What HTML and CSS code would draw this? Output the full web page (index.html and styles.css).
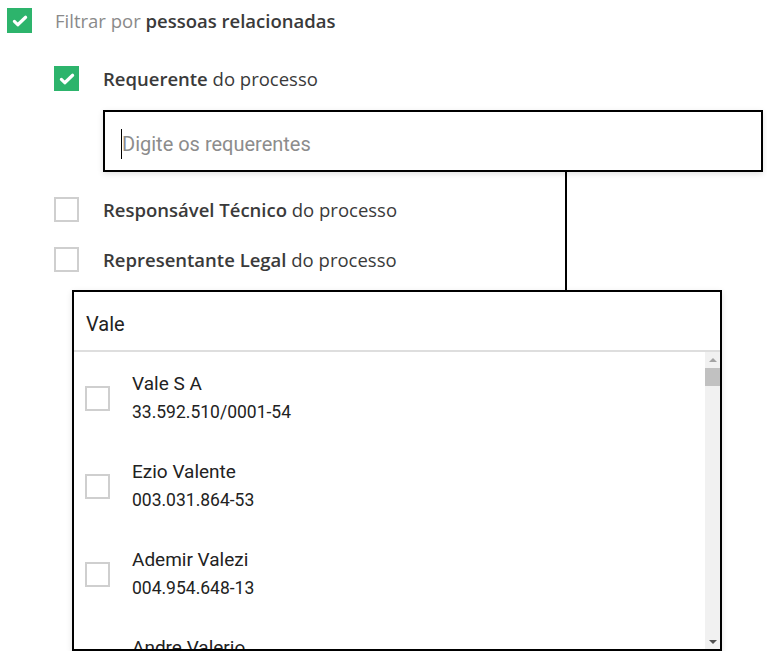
FILE: index.html
```html
<!DOCTYPE html>
<html lang="pt-BR">
<head>
    <meta charset="UTF-8">
    <meta name="viewport" content="width=device-width, initial-scale=1.0">
    <title>Filtrar por pessoas relacionadas</title>
    <link rel="stylesheet" href="styles.css">
</head>
<body>
    <div class="filter">
        <label class="row row-main">
            <span class="check checked">
                <svg viewBox="0 0 24 24" width="18" height="18"><path d="M4.5 12.5l4.5 4.5L19.5 7" fill="none" stroke="#fff" stroke-width="4.2" stroke-linecap="round" stroke-linejoin="round"/></svg>
            </span>
            <span class="label"><span class="muted">Filtrar por</span> <b>pessoas relacionadas</b></span>
        </label>

        <div class="options">
            <label class="row">
                <span class="check checked">
                    <svg viewBox="0 0 24 24" width="18" height="18"><path d="M4.5 12.5l4.5 4.5L19.5 7" fill="none" stroke="#fff" stroke-width="4.2" stroke-linecap="round" stroke-linejoin="round"/></svg>
                </span>
                <span class="label"><b>Requerente</b> do processo</span>
            </label>

            <div class="search">
                <span class="caret"></span>
                <span class="placeholder">Digite os requerentes</span>
                <span class="connector"></span>
            </div>

            <label class="row row-gap">
                <span class="check"></span>
                <span class="label"><b>Responsável Técnico</b> do processo</span>
            </label>

            <label class="row row-gap">
                <span class="check"></span>
                <span class="label"><b>Representante Legal</b> do processo</span>
            </label>
        </div>

        <div class="dropdown">
            <div class="dropdown-head">Vale</div>
            <div class="dropdown-body">
                <ul class="results">
                    <li class="result">
                        <span class="check"></span>
                        <div class="result-text">
                            <div class="name">Vale S A</div>
                            <div class="doc">33.592.510/0001-54</div>
                        </div>
                    </li>
                    <li class="result">
                        <span class="check"></span>
                        <div class="result-text">
                            <div class="name">Ezio Valente</div>
                            <div class="doc">003.031.864-53</div>
                        </div>
                    </li>
                    <li class="result">
                        <span class="check"></span>
                        <div class="result-text">
                            <div class="name">Ademir Valezi</div>
                            <div class="doc">004.954.648-13</div>
                        </div>
                    </li>
                    <li class="result">
                        <span class="check"></span>
                        <div class="result-text">
                            <div class="name">Andre Valerio</div>
                            <div class="doc">005.112.398-40</div>
                        </div>
                    </li>
                </ul>
                <div class="scrollbar">
                    <span class="arrow up"></span>
                    <span class="thumb"></span>
                    <span class="track"></span>
                    <span class="arrow down"></span>
                </div>
            </div>
        </div>
    </div>
</body>
</html>
```

FILE: styles.css
```css
body {
    margin: 0;
    padding-top: 8px;
    font-family: "Open Sans", "Noto Sans", sans-serif;
    color: #3a3a3a;
    background: #fff;
    overflow: hidden;
}

.row {
    display: flex;
    align-items: center;
    height: 25px;
}

.row-main {
    margin-left: 7px;
}

.row-main .check {
    margin-right: 23px;
}

.label {
    font-size: 18.5px;
    line-height: 25px;
}

.label b {
    font-weight: 600;
}

.muted {
    color: #8a8a8a;
}

.check {
    box-sizing: border-box;
    width: 25px;
    height: 25px;
    border: 2px solid #cfcfcf;
    background: #fff;
    display: flex;
    align-items: center;
    justify-content: center;
    flex-shrink: 0;
}

.check.checked {
    border: none;
    background: #2db46c;
}

.options {
    margin-left: 54px;
    margin-top: 33px;
}

.options .check {
    margin-right: 24px;
}

.row-gap {
    margin-top: 25px;
}

.search {
    position: relative;
    box-sizing: border-box;
    margin: 19px 0 0 49px;
    width: 660px;
    height: 62px;
    border: 2px solid #000;
    box-shadow: 0 2px 6px rgba(0, 0, 0, 0.12);
    display: flex;
    align-items: center;
    padding: 5px 0 0 16px;
    font-family: "Roboto", sans-serif;
}

.caret {
    width: 1px;
    height: 30px;
    background: #000;
}

.placeholder {
    font-size: 20px;
    color: #8c8c8c;
}

.connector {
    position: absolute;
    left: 460px;
    top: 60px;
    width: 2px;
    height: 120px;
    background: #000;
}

.dropdown {
    box-sizing: border-box;
    margin: 18px 0 0 72px;
    width: 650px;
    height: 361px;
    border: 2px solid #000;
    box-shadow: 0 2px 6px rgba(0, 0, 0, 0.12);
    font-family: "Roboto", sans-serif;
    color: #222;
    display: flex;
    flex-direction: column;
}

.dropdown-head {
    height: 60px;
    padding: 6px 0 0 12px;
    box-sizing: border-box;
    display: flex;
    align-items: center;
    font-size: 20px;
    border-bottom: 2px solid #dedede;
}

.dropdown-body {
    flex: 1;
    display: flex;
    min-height: 0;
}

.results {
    flex: 1;
    list-style: none;
    margin: 0;
    padding: 0;
    overflow: hidden;
}

.result {
    display: flex;
    align-items: center;
    height: 88px;
    box-sizing: border-box;
    padding: 17px 0 13px 11px;
}

.result .check {
    margin-right: 22px;
}

.name {
    font-size: 19px;
    line-height: 29px;
}

.doc {
    font-size: 17.5px;
    line-height: 29px;
}

.scrollbar {
    width: 15px;
    background: #f1f1f1;
    display: flex;
    flex-direction: column;
    align-items: center;
}

.arrow {
    width: 0;
    height: 0;
    border-left: 4px solid transparent;
    border-right: 4px solid transparent;
}

.arrow.up {
    margin-top: 6px;
    border-bottom: 4px solid #a3a3a3;
}

.arrow.down {
    margin-bottom: 5px;
    border-top: 4px solid #505050;
}

.thumb {
    margin-top: 6px;
    width: 15px;
    height: 18px;
    background: #c1c1c1;
}

.track {
    flex: 1;
}
```
